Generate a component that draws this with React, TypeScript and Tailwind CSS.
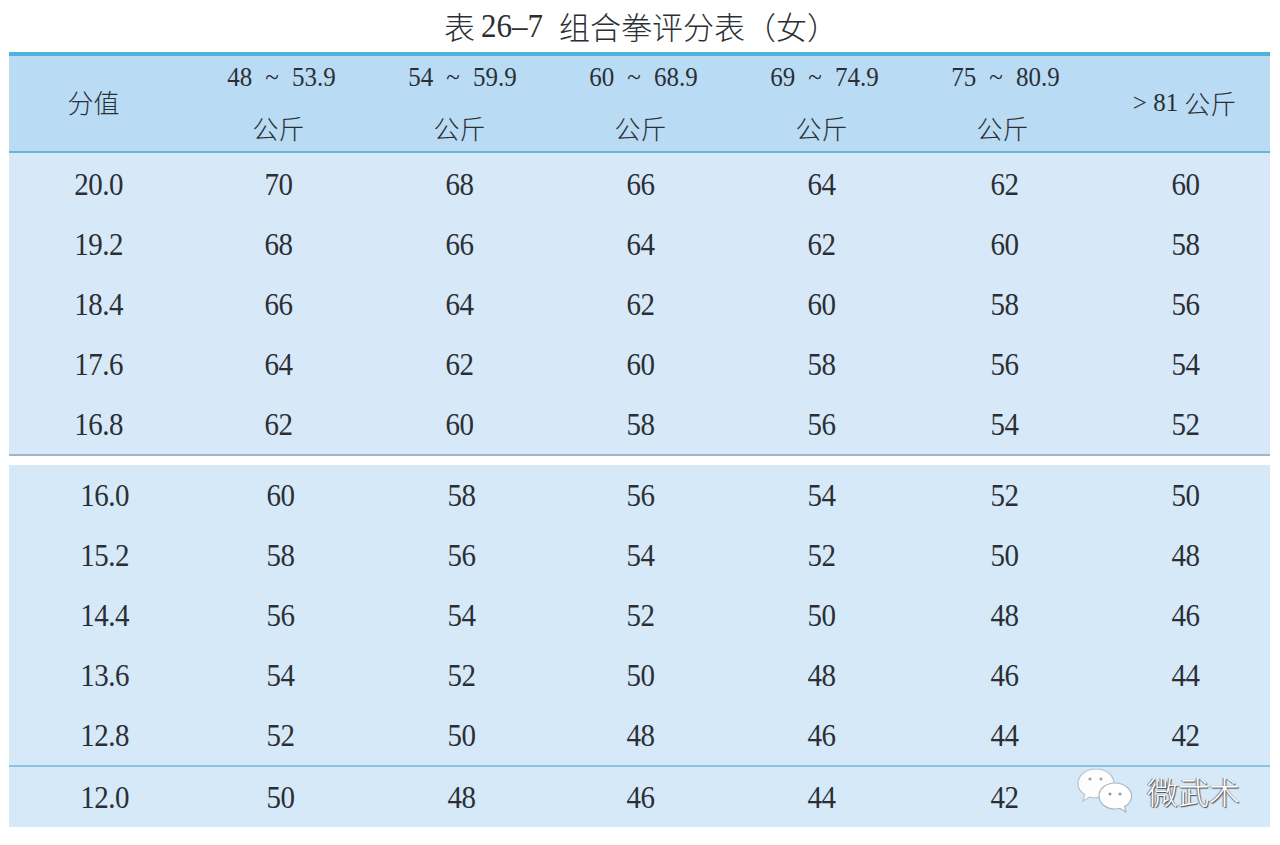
import React from "react";

const serif = "font-['Liberation_Serif','Noto_Sans_CJK_SC',serif]";
const cols = "grid grid-cols-[179px_181px_181px_181px_181px_181px_177px]";

const section1 = [
  ["20.0", "70", "68", "66", "64", "62", "60"],
  ["19.2", "68", "66", "64", "62", "60", "58"],
  ["18.4", "66", "64", "62", "60", "58", "56"],
  ["17.6", "64", "62", "60", "58", "56", "54"],
  ["16.8", "62", "60", "58", "56", "54", "52"],
];

const section2 = [
  ["16.0", "60", "58", "56", "54", "52", "50"],
  ["15.2", "58", "56", "54", "52", "50", "48"],
  ["14.4", "56", "54", "52", "50", "48", "46"],
  ["13.6", "54", "52", "50", "48", "46", "44"],
  ["12.8", "52", "50", "48", "46", "44", "42"],
];

const lastRow = ["12.0", "50", "48", "46", "44", "42", ""];

const ranges = [
  ["48", "53.9"],
  ["54", "59.9"],
  ["60", "68.9"],
  ["69", "74.9"],
  ["75", "80.9"],
];

const Row = ({ cells, shift }: { cells: string[]; shift?: boolean }) => (
  <div className={`${cols} h-[60px] items-center`}>
    {cells.map((c, i) => (
      <div
        key={i}
        className={`text-center text-[29px] leading-none tracking-[-0.5px] scale-y-[1.1] ${
          shift && i === 0 ? "pl-[12px]" : ""
        } ${shift && i > 0 && i < 3 ? "pl-[4px]" : ""} ${i === 5 ? "pl-[4px]" : ""} ${
          i === 6 ? "pl-[8px]" : ""
        }`}
      >
        {c}
      </div>
    ))}
  </div>
);

const WeChatMark = () => (
  <div className="absolute right-[30px] bottom-[14px] flex items-center gap-[12px]">
    <svg width="58" height="46" viewBox="0 0 58 46">
      <path
        d="M19 2C9 2 1 8.5 1 16.5c0 4.5 2.6 8.5 6.6 11.1L6 34l7-4c2 .6 4 .9 6 .9 10 0 18-6.5 18-14.4S29 2 19 2z"
        fill="#fdfdfd"
        stroke="#b8c4cc"
        strokeWidth="1.2"
      />
      <circle cx="13" cy="12" r="1.6" fill="#9aa6ae" />
      <circle cx="24" cy="12" r="1.6" fill="#9aa6ae" />
      <path
        d="M38 16c-9 0-16 5.8-16 13s7 13 16 13c1.7 0 3.3-.2 4.8-.7L49 45l-1.4-5.4C52 37.3 54.6 33.4 54.6 29 54.6 21.8 47 16 38 16z"
        fill="#ffffff"
        stroke="#aab6be"
        strokeWidth="1.2"
      />
      <circle cx="33" cy="27" r="1.5" fill="#8e9aa2" />
      <circle cx="43" cy="27" r="1.5" fill="#8e9aa2" />
    </svg>
    <span className="text-[31px] leading-none text-white font-['Noto_Sans_CJK_SC',sans-serif] font-light [text-shadow:1px_1px_1px_#444,-1px_0_1px_#777]">
      微武术
    </span>
  </div>
);

export default function App() {
  return (
    <div className={`w-[1280px] h-[845px] bg-white text-[#2b2f35] ${serif}`}>
      <h1 className="h-[52px] flex items-center justify-center text-[31px] leading-none pl-[2px] pb-[2px]">
        <span className="font-['Noto_Sans_CJK_SC',sans-serif] font-light">表</span>
        <span className="ml-[6px] scale-y-[1.1]">26–7</span>
        <span className="ml-[16px] font-['Noto_Sans_CJK_SC',sans-serif] font-light">
          组合拳评分表（女）
        </span>
      </h1>

      <div className="ml-[9px] w-[1261px] relative">
        <div className="h-[4px] bg-[#4fb2dc]" />
        <div className={`${cols} h-[97px] bg-[#b9dbf3] border-b-2 border-[#6cb2d9]`}>
          <div className="flex items-center justify-center text-[26px] pr-[10px] pb-[4px] font-['Noto_Sans_CJK_SC',sans-serif] font-light">
            分值
          </div>
          {ranges.map(([a, b], i) => (
            <div key={i} className="flex flex-col items-center pt-[4px]">
              <div className="flex gap-[13px] text-[25px] leading-[34px] pl-[6px] scale-y-[1.08]">
                <span>{a}</span>
                <span>~</span>
                <span>{b}</span>
              </div>
              <div className="mt-[21px] text-[26px] leading-none font-['Noto_Sans_CJK_SC',sans-serif] font-light">
                公斤
              </div>
            </div>
          ))}
          <div className="flex items-center justify-center pl-[6px] pb-[2px] text-[25px]">
            <span>&gt; 81</span>
            <span className="ml-[6px] text-[26px] font-['Noto_Sans_CJK_SC',sans-serif] font-light">
              公斤
            </span>
          </div>
        </div>

        <div className="bg-[#d7e9f8] pt-[1px] border-b-2 border-[#9db8cb]">
          {section1.map((r, i) => (
            <Row key={i} cells={r} />
          ))}
        </div>

        <div className="h-[9px] bg-white" />

        <div className="bg-[#d6e9f8] border-b-2 border-[#8cc3e4]">
          {section2.map((r, i) => (
            <Row key={i} cells={r} shift />
          ))}
        </div>

        <div className="bg-[#d6e9f8]">
          <Row cells={lastRow} shift />
        </div>

        <WeChatMark />
      </div>
    </div>
  );
}
